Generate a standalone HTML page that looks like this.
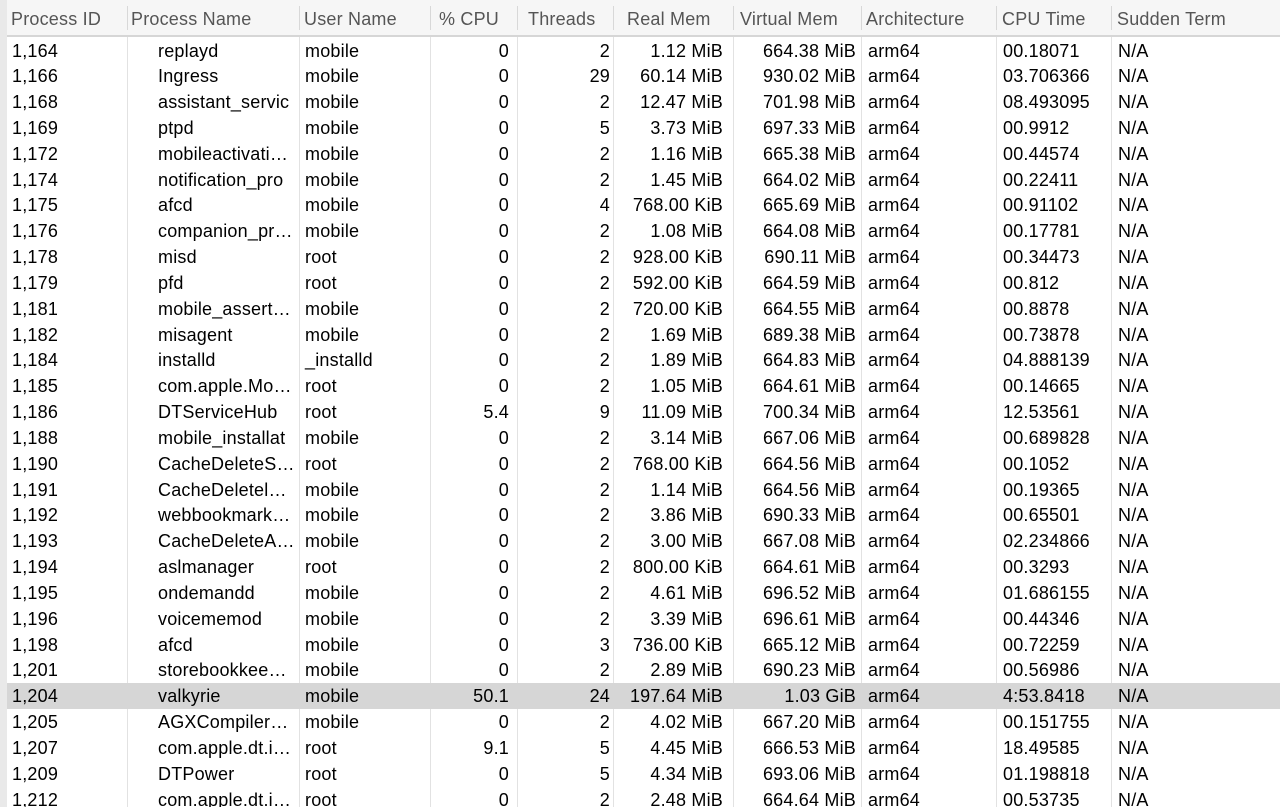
<!DOCTYPE html>
<html><head><meta charset="utf-8"><style>
body{margin:0;width:1280px;height:807px;overflow:hidden;background:#fff;font-family:"Liberation Sans",Arial,sans-serif;position:relative}
#strip{position:absolute;left:0;top:0;width:7px;height:807px;background:#e9e9e9}
#tbl{position:absolute;left:7px;top:0;width:1273px;height:807px;background:#fff;overflow:hidden}
.hdr{position:absolute;left:0;top:0;width:1273px;height:37px;background:#f6f6f6;border-bottom:2px solid #d6d6d6;box-sizing:border-box}
.h{position:absolute;top:9px;font-size:18px;letter-spacing:0.2px;color:#555;white-space:nowrap}
.vl{position:absolute;top:37px;width:1px;height:770px;background:#e2e2e2}
.hs{position:absolute;top:6px;width:1px;height:24px;background:#d8d8d8}
.row{position:absolute;left:0;width:1273px;height:25.83px;font-size:18px;letter-spacing:0.2px;color:#000}
.row span{position:absolute;top:3px;white-space:nowrap}
.r{text-align:right}
.sel{background:#d6d6d6}
</style></head><body>
<div id="strip"></div>
<div id="tbl">
<div class="hdr">
<div class="h" style="left:4px">Process ID</div>
<div class="h" style="left:124px">Process Name</div>
<div class="h" style="left:297px">User Name</div>
<div class="h" style="left:432px">% CPU</div>
<div class="h" style="left:521px">Threads</div>
<div class="h" style="left:620px">Real Mem</div>
<div class="h" style="left:733px">Virtual Mem</div>
<div class="h" style="left:859px">Architecture</div>
<div class="h" style="left:995px">CPU Time</div>
<div class="h" style="left:1110px">Sudden Term</div>
</div>
<div id="rows"></div>
</div>
<script>
var d=`1,164|replayd|mobile|0|2|1.12 MiB|664.38 MiB|00.18071
1,166|Ingress|mobile|0|29|60.14 MiB|930.02 MiB|03.706366
1,168|assistant_servic|mobile|0|2|12.47 MiB|701.98 MiB|08.493095
1,169|ptpd|mobile|0|5|3.73 MiB|697.33 MiB|00.9912
1,172|mobileactivati…|mobile|0|2|1.16 MiB|665.38 MiB|00.44574
1,174|notification_pro|mobile|0|2|1.45 MiB|664.02 MiB|00.22411
1,175|afcd|mobile|0|4|768.00 KiB|665.69 MiB|00.91102
1,176|companion_pr…|mobile|0|2|1.08 MiB|664.08 MiB|00.17781
1,178|misd|root|0|2|928.00 KiB|690.11 MiB|00.34473
1,179|pfd|root|0|2|592.00 KiB|664.59 MiB|00.812
1,181|mobile_assert…|mobile|0|2|720.00 KiB|664.55 MiB|00.8878
1,182|misagent|mobile|0|2|1.69 MiB|689.38 MiB|00.73878
1,184|installd|_installd|0|2|1.89 MiB|664.83 MiB|04.888139
1,185|com.apple.Mo…|root|0|2|1.05 MiB|664.61 MiB|00.14665
1,186|DTServiceHub|root|5.4|9|11.09 MiB|700.34 MiB|12.53561
1,188|mobile_installat|mobile|0|2|3.14 MiB|667.06 MiB|00.689828
1,190|CacheDeleteS…|root|0|2|768.00 KiB|664.56 MiB|00.1052
1,191|CacheDeletel…|mobile|0|2|1.14 MiB|664.56 MiB|00.19365
1,192|webbookmark…|mobile|0|2|3.86 MiB|690.33 MiB|00.65501
1,193|CacheDeleteA…|mobile|0|2|3.00 MiB|667.08 MiB|02.234866
1,194|aslmanager|root|0|2|800.00 KiB|664.61 MiB|00.3293
1,195|ondemandd|mobile|0|2|4.61 MiB|696.52 MiB|01.686155
1,196|voicememod|mobile|0|2|3.39 MiB|696.61 MiB|00.44346
1,198|afcd|mobile|0|3|736.00 KiB|665.12 MiB|00.72259
1,201|storebookkee…|mobile|0|2|2.89 MiB|690.23 MiB|00.56986
1,204|valkyrie|mobile|50.1|24|197.64 MiB|1.03 GiB|4:53.8418
1,205|AGXCompiler…|mobile|0|2|4.02 MiB|667.20 MiB|00.151755
1,207|com.apple.dt.i…|root|9.1|5|4.45 MiB|666.53 MiB|18.49585
1,209|DTPower|root|0|5|4.34 MiB|693.06 MiB|01.198818
1,212|com.apple.dt.i…|root|0|2|2.48 MiB|664.64 MiB|00.53735`.split('\n');
var h='';
[120,292,423,510,606,726,854,989,1104].forEach(function(x){h+='<div class="vl" style="left:'+x+'px"></div><div class="hs" style="left:'+x+'px"></div>';});
d.forEach(function(l,i){var c=l.split('|');var top=37.5+i*25.83;
h+='<div class="row'+(c[1]=='valkyrie'?' sel':'')+'" style="top:'+top+'px">'+
'<span style="left:5px">'+c[0]+'</span>'+
'<span style="left:151px">'+c[1]+'</span>'+
'<span style="left:298px">'+c[2]+'</span>'+
'<span class="r" style="right:771px">'+c[3]+'</span>'+
'<span class="r" style="right:670px">'+c[4]+'</span>'+
'<span class="r" style="right:557px">'+c[5]+'</span>'+
'<span class="r" style="right:424px">'+c[6]+'</span>'+
'<span style="left:861px">arm64</span>'+
'<span style="left:996px">'+c[7]+'</span>'+
'<span style="left:1111px">N/A</span></div>';});
document.getElementById('rows').innerHTML=h;
</script>
</body></html>
